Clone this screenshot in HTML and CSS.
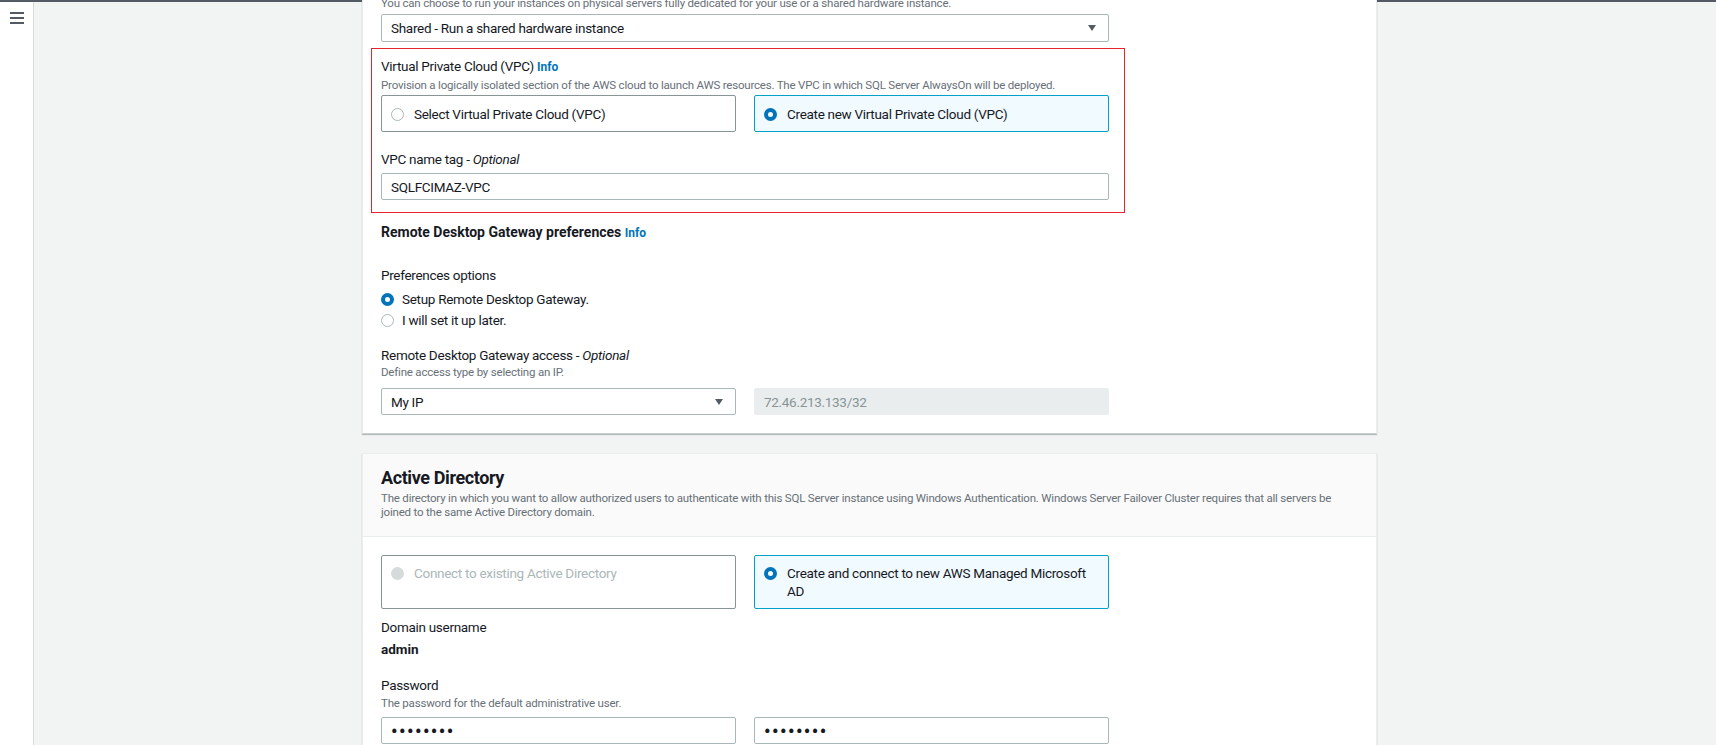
FILE: index.html
```html
<!DOCTYPE html>
<html lang="en">
<head>
  <meta charset="UTF-8" />
  <meta name="viewport" content="width=device-width, initial-scale=1.0" />
  <title>SQL Server AlwaysOn - Network and Active Directory</title>
  <link rel="stylesheet" href="styles.css">
</head>
<body>
<div class="app">

  <nav class="sidebar">
    <svg class="menu-icon" width="14" height="12" viewBox="0 0 14 12">
      <path d="M0 1h14M0 6h14M0 11h14" stroke="#545b64" stroke-width="2" fill="none" />
    </svg>
  </nav>

  <main class="content">

    <section class="card card-network">
      <div class="card-body">
        <p class="desc">You can choose to run your instances on physical servers fully dedicated for your use or a shared hardware instance.</p>
        <div class="select wide">
          <span>Shared - Run a shared hardware instance</span>
          <span class="caret"></span>
        </div>

        <div class="highlight">
          <div class="label">Virtual Private Cloud (VPC) <a class="info">Info</a></div>
          <p class="desc">Provision a logically isolated section of the AWS cloud to launch AWS resources. The VPC in which SQL Server AlwaysOn will be deployed.</p>
          <div class="tiles">
            <div class="tile"><span class="radio"></span>Select Virtual Private Cloud (VPC)</div>
            <div class="tile selected"><span class="radio on"></span>Create new Virtual Private Cloud (VPC)</div>
          </div>

          <div class="label name-tag">VPC name tag - <em>Optional</em></div>
          <div class="input">SQLFCIMAZ-VPC</div>
        </div>

        <h3 class="group-title">Remote Desktop Gateway preferences <a class="info">Info</a></h3>

        <div class="label prefs">Preferences options</div>
        <div class="radio-row"><span class="radio on"></span>Setup Remote Desktop Gateway.</div>
        <div class="radio-row"><span class="radio"></span>I will set it up later.</div>

        <div class="label access">Remote Desktop Gateway access - <em>Optional</em></div>
        <p class="desc">Define access type by selecting an IP.</p>
        <div class="pair">
          <div class="select">
            <span>My IP</span>
            <span class="caret"></span>
          </div>
          <div class="input disabled">72.46.213.133/32</div>
        </div>
      </div>
    </section>

    <section class="card card-directory">
      <header class="card-header">
        <h2>Active Directory</h2>
        <p class="desc">The directory in which you want to allow authorized users to authenticate with this SQL Server instance using Windows Authentication. Windows Server Failover Cluster requires that all servers be joined to the same Active Directory domain.</p>
      </header>
      <div class="card-body">
        <div class="tiles">
          <div class="tile tall disabled"><span class="radio off"></span>Connect to existing Active Directory</div>
          <div class="tile tall selected"><span class="radio on"></span>Create and connect to new AWS Managed Microsoft AD</div>
        </div>

        <div class="label user">Domain username</div>
        <div class="value">admin</div>

        <div class="label password">Password</div>
        <p class="desc">The password for the default administrative user.</p>
        <div class="pair">
          <div class="input secret">&bull;&bull;&bull;&bull;&bull;&bull;&bull;&bull;</div>
          <div class="input secret">&bull;&bull;&bull;&bull;&bull;&bull;&bull;&bull;</div>
        </div>
      </div>
    </section>

  </main>
</div>
</body>
</html>
```

FILE: styles.css
```css
body {
  margin: 0;
  font-family: Roboto, "Noto Sans", sans-serif;
  font-size: 13.5px;
  letter-spacing: -0.3px;
  color: #16191f;
  overflow: hidden;
}
.app {
  display: flex;
  height: 745px;
  border-top: 2px solid #545b64;
  box-sizing: border-box;
}
.sidebar {
  width: 34px;
  flex-shrink: 0;
  background: #fff;
  border-right: 1px solid #d5dbdb;
  padding: 10px 0 0 10px;
  box-sizing: border-box;
}
.menu-icon {
  display: block;
}
.content {
  flex: 1;
  background: #f2f3f3;
  padding-left: 328px;
}
.card {
  width: 1015px;
  box-sizing: border-box;
  background: #fff;
  border: 1px solid #eaeded;
  border-bottom-color: #c6cbcc;
  box-shadow: 0 1px 1px rgba(0, 28, 36, 0.25);
}
.card-network {
  margin-top: -6px;
  border-top: none;
}
.card-directory {
  margin-top: 19px;
}
.card-body {
  padding: 0 18px 18px;
}
.card-directory .card-body {
  padding-top: 18px;
}
.card-network .card-body > .desc:first-child {
  margin: 0;
}
.card-header {
  background: #fafafa;
  border-bottom: 1px solid #eaeded;
  padding: 12px 18px 17px;
}
.card-header h2 {
  margin: 0;
  font-size: 18px;
  line-height: 24px;
  font-weight: 700;
  letter-spacing: -0.4px;
}
.card-header .desc {
  margin-top: 1px;
}
.desc {
  margin: 0;
  font-size: 11.5px;
  letter-spacing: -0.2px;
  line-height: 14px;
  color: #687078;
}
.label {
  line-height: 20px;
}
.label em {
  font-style: italic;
}
.info {
  color: #0073bb;
  font-size: 12px;
  font-weight: 700;
  letter-spacing: 0;
  cursor: pointer;
}
.select,
.input {
  box-sizing: border-box;
  height: 27px;
  border: 1px solid #aab7b8;
  border-radius: 2px;
  padding: 0 9px;
  display: flex;
  align-items: center;
  background: #fff;
}
.select {
  justify-content: space-between;
  padding-right: 12px;
}
.select.wide {
  width: 728px;
  height: 28px;
  margin-top: 4px;
}
.caret {
  width: 0;
  height: 0;
  border-left: 4px solid transparent;
  border-right: 4px solid transparent;
  border-top: 6px solid #545b64;
}
.input.disabled {
  background: #eaeded;
  border-color: #eaeded;
  color: #879596;
}
.input.secret {
  font-size: 18px;
  font-weight: 700;
  letter-spacing: 1.5px;
  padding-top: 1px;
}
.highlight {
  width: 754px;
  box-sizing: border-box;
  margin: 6px 0 0 -10px;
  border: 1px solid #e5232b;
  padding: 7px 15px 12px 9px;
}
.highlight .desc {
  line-height: 16px;
}
.tiles {
  display: grid;
  grid-template-columns: 355px 355px;
  gap: 18px;
}
.highlight .tiles {
  margin-top: 2px;
}
.tile {
  display: flex;
  align-items: flex-start;
  gap: 10px;
  border: 1px solid #879596;
  border-radius: 2px;
  padding: 8px 12px 7px 9px;
  line-height: 20px;
}
.tile.selected {
  border-color: #00a1c9;
  background: #f1faff;
}
.tile.disabled {
  color: #aab7b8;
}
.tile.tall {
  padding: 8px 16px 8px 9px;
  line-height: 18px;
}
.radio {
  flex-shrink: 0;
  width: 13px;
  height: 13px;
  box-sizing: border-box;
  border: 1px solid #aab7b8;
  border-radius: 50%;
  background: #fff;
  margin-top: 4px;
}
.tile.tall .radio {
  margin-top: 3px;
}
.radio.on {
  border: 4px solid #0073bb;
}
.radio.off {
  border: none;
  background: #d5dbdb;
}
.name-tag {
  margin-top: 17px;
}
.highlight .input {
  width: 728px;
  margin-top: 4px;
}
.group-title {
  margin: 9px 0 0;
  font-size: 14px;
  line-height: 20px;
  font-weight: 700;
  letter-spacing: 0;
}
.prefs {
  margin-top: 22px;
}
.radio-row {
  display: flex;
  align-items: center;
  gap: 8px;
  line-height: 20px;
  margin-top: 1px;
}
.radio-row .radio {
  margin-top: 0;
}
.prefs + .radio-row {
  margin-top: 4px;
}
.access {
  margin-top: 15px;
}
.pair {
  display: grid;
  grid-template-columns: 355px 355px;
  gap: 18px;
  margin-top: 9px;
}
.user {
  margin-top: 8px;
}
.value {
  font-weight: 700;
  letter-spacing: 0;
  line-height: 20px;
  margin-top: 2px;
}
.password {
  margin-top: 16px;
}
.password + .desc {
  line-height: 16px;
}
.card-directory .pair {
  margin-top: 6px;
}
```
